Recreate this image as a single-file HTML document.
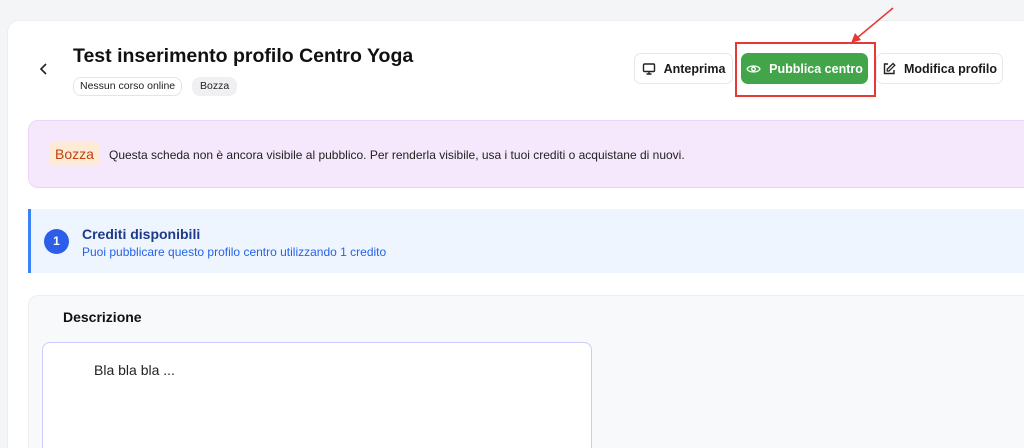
<!DOCTYPE html><html><head><style>
html,body{margin:0;width:1024px;height:448px;overflow:hidden}
body{background:#f4f5f7;font-family:"Liberation Sans",sans-serif;position:relative}
.a{position:absolute}
.card{left:7px;top:20px;width:1030px;height:440px;background:#fff;border:1px solid #eceef1;border-radius:12px}
.btn{top:53px;height:31px;border:1px solid #e6e7ea;border-radius:7px;background:#fff;font-size:12.5px;font-weight:bold;color:#1a1a1a;display:flex;align-items:center;justify-content:center;gap:8px;box-sizing:border-box}
</style></head><body>
<div class="a card"></div>
<svg class="a" style="left:38px;top:62px" width="12" height="14"><path d="M8 2 L3 7 L8 12" stroke="#222" stroke-width="1.6" fill="none"/></svg>
<div class="a" style="left:73px;top:45px;font-size:19.5px;font-weight:bold;color:#111">Test inserimento profilo Centro Yoga</div>
<div class="a" style="left:73px;top:77px;height:17px;padding:0 6px;border:1px solid #e3e4e7;border-radius:8px;font-size:10.5px;line-height:17px;color:#222">Nessun corso online</div>
<div class="a" style="left:192px;top:77px;height:19px;padding:0 8px;background:#f0f0f2;border-radius:8px;font-size:10.5px;line-height:19px;color:#222">Bozza</div>
<div class="a btn" style="left:634px;width:99px"><svg width="14" height="14" viewBox="0 0 14 14"><rect x="1.5" y="2" width="11" height="7.5" rx="1" stroke="#222" stroke-width="1.4" fill="none"/><path d="M7 9.5V12M4.5 12h5" stroke="#222" stroke-width="1.4"/></svg>Anteprima</div>
<div class="a btn" style="left:741px;width:127px;background:#43a54a;border-color:#43a54a;color:#fff"><svg width="15" height="12" viewBox="0 0 15 12"><path d="M1 6C3 2 12 2 14 6C12 10 3 10 1 6Z" stroke="#fff" stroke-width="1.3" fill="none"/><circle cx="7.5" cy="6" r="1.8" stroke="#fff" stroke-width="1.3" fill="none"/></svg>Pubblica centro</div>
<div class="a btn" style="left:876px;width:127px"><svg width="14" height="14" viewBox="0 0 14 14"><path d="M6 2H2.5v9.5H12V8" stroke="#222" stroke-width="1.4" fill="none"/><path d="M11 1.5l1.8 1.8L7 9H5.2V7.2Z" stroke="#222" stroke-width="1.3" fill="none"/></svg>Modifica profilo</div>
<div class="a" style="left:735px;top:42px;width:137px;height:51px;border:2px solid #e53935"></div>
<svg class="a" style="left:845px;top:5px" width="55" height="42"><path d="M48 3 L12 33" stroke="#e53935" stroke-width="1.6"/><path d="M6 38 L10 28 L16 35Z" fill="#e53935"/></svg>
<div class="a" style="left:28px;top:120px;width:1002px;height:66px;background:#f5e8fc;border:1px solid #ead6f6;border-radius:10px"></div>
<div class="a" style="left:49px;top:142px;width:51px;height:24px;background:#fdebd5;border-radius:5px;color:#c2410c;font-size:14px;line-height:24px;text-align:center">Bozza</div>
<div class="a" style="left:109px;top:148px;font-size:12px;color:#222">Questa scheda non è ancora visibile al pubblico. Per renderla visibile, usa i tuoi crediti o acquistane di nuovi.</div>
<div class="a" style="left:28px;top:209px;width:1002px;height:64px;background:#eef5ff;border-left:3px solid #3b82f6;border-radius:0 8px 8px 0"></div>
<div class="a" style="left:44px;top:229px;width:25px;height:25px;border-radius:50%;background:#2d5ee8;color:#fff;font-weight:bold;font-size:12px;line-height:25px;text-align:center">1</div>
<div class="a" style="left:82px;top:226px;font-size:14px;font-weight:bold;color:#1e3a8a">Crediti disponibili</div>
<div class="a" style="left:82px;top:245px;font-size:12px;color:#2563eb">Puoi pubblicare questo profilo centro utilizzando 1 credito</div>
<div class="a" style="left:28px;top:295px;width:1002px;height:170px;background:#f8f9fb;border:1px solid #eceef1;border-radius:10px"></div>
<div class="a" style="left:63px;top:309px;font-size:14px;font-weight:bold;color:#111">Descrizione</div>
<div class="a" style="left:42px;top:342px;width:548px;height:120px;background:#fff;border:1px solid #c8cbfb;border-radius:8px"></div>
<div class="a" style="left:94px;top:362px;font-size:14px;color:#222">Bla bla bla ...</div>
</body></html>
